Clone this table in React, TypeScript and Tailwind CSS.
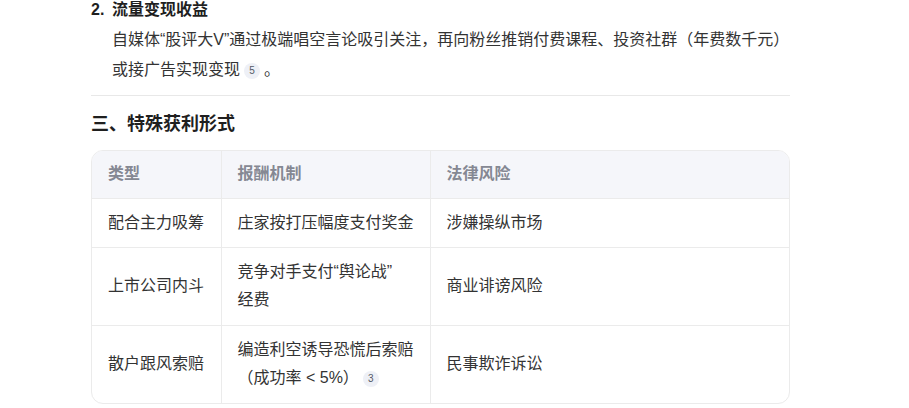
import React from "react";

const Cite = ({ n }: { n: string }) => (
  <span className="mx-[4px] inline-flex h-[16px] w-[16px] items-center justify-center rounded-full bg-[#eef0f6] align-[1px] text-[10px] leading-none text-[#555a66]">
    {n}
  </span>
);

const rows: { a: React.ReactNode; b: React.ReactNode; c: React.ReactNode; h: string }[] = [
  { a: "配合主力吸筹", b: "庄家按打压幅度支付奖金", c: "涉嫌操纵市场", h: "h-[49px]" },
  {
    a: "上市公司内斗",
    b: (
      <>
        <span className="whitespace-nowrap">竞争对手支付“舆论战”</span>
        <br />
        经费
      </>
    ),
    c: "商业诽谤风险",
    h: "h-[78px]",
  },
  {
    a: "散户跟风索赔",
    b: (
      <>
        编造利空诱导恐慌后索赔（成功率 &lt; 5%）
        <Cite n="3" />
      </>
    ),
    c: "民事欺诈诉讼",
    h: "h-[78px]",
  },
];

export default function App() {
  return (
    <div
      className="h-[408px] w-[909px] overflow-hidden bg-white text-[#333333]"
      style={{ fontFamily: '"Liberation Sans", "Noto Sans CJK SC", sans-serif' }}
    >
      <div className="ml-[91px] w-[699px]">
        <div className="flex text-[16px] font-bold leading-[20px] text-[#1f1f1f]">
          <span className="w-[21px]">2.</span>
          <span>流量变现收益</span>
        </div>
        <p className="mt-[5px] pl-[21px] text-[16px] leading-[30px] text-[#333333]">
          自媒体“股评大V”通过极端唱空言论吸引关注，再向粉丝推销付费课程、投资社群（年费数千元）或接广告实现变现
          <Cite n="5" />。
        </p>
        <div className="mt-[10px] h-px w-full bg-[#e8e8e8]" />
        <h3 className="mt-[14px] text-[18px] font-bold leading-[28px] text-[#1f1f1f]">三、特殊获利形式</h3>
        <div className="mt-[12px] overflow-hidden rounded-[12px] border border-[#ebebeb]">
          <table className="w-full table-fixed border-collapse text-[16px] leading-[28px]">
            <colgroup>
              <col className="w-[129px]" />
              <col className="w-[209px]" />
              <col />
            </colgroup>
            <thead>
              <tr className="h-[47px] bg-[#f5f6fa]">
                <th className="px-[16px] text-left font-semibold text-[#858893]">类型</th>
                <th className="border-l border-[#ebebeb] px-[16px] text-left font-semibold text-[#858893]">报酬机制</th>
                <th className="border-l border-[#ebebeb] px-[16px] text-left font-semibold text-[#858893]">法律风险</th>
              </tr>
            </thead>
            <tbody>
              {rows.map((r, i) => (
                <tr key={i} className={`border-t border-[#ebebeb] ${r.h}`}>
                  <td className="px-[16px] align-middle">{r.a}</td>
                  <td className="border-l border-[#ebebeb] px-[16px] align-middle">{r.b}</td>
                  <td className="border-l border-[#ebebeb] px-[16px] align-middle">{r.c}</td>
                </tr>
              ))}
            </tbody>
          </table>
        </div>
      </div>
    </div>
  );
}
